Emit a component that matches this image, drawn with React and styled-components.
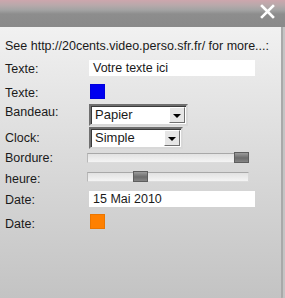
import React from "react";
import styled, { createGlobalStyle } from "styled-components";

const Global = createGlobalStyle`
   html, body {
      margin: 0;
      padding: 0;
      background: #c4c4c4;
   }
   body {
      font-family: "Liberation Sans", Arial, sans-serif;
   }
`;

const Panel = styled.div`
   width: 285px;
   height: 298px;
   display: flex;
   flex-direction: column;
   overflow: hidden;
   border-bottom-right-radius: 4px;
   background: #c4c4c4;
`;

const Header = styled.div`
   height: 27px;
   flex: none;
   display: flex;
   justify-content: flex-end;
   align-items: flex-start;
   padding: 4px 10px 0 0;
   box-sizing: border-box;
   background: linear-gradient(
      to bottom,
      #cda6ad 0px,
      #b9a9ab 5px,
      #a3a3a3 10px,
      #8d8d8d 14px,
      #8a8a8a 26px
   );
`;

const CloseButton = styled.svg`
   width: 15px;
   height: 15px;
   display: block;
`;

const Body = styled.div`
   flex: 1;
   padding: 11px 0 0 5px;
   border-right: 2px solid #a9a9a9;
   margin-right: 2px;
   background: linear-gradient(to bottom, #f1f1f1 0%, #dcdcdc 45%, #c3c3c3 100%);
   color: #1a1a1a;
   font-size: 12.5px;
`;

const Intro = styled.div`
   height: 16px;
   line-height: 16px;
   white-space: nowrap;
   margin-bottom: 6px;
`;

const Rows = styled.div`
   display: flex;
   flex-direction: column;
`;

const Row = styled.div`
   display: flex;
   align-items: flex-start;
   height: ${(props) => props.h}px;
`;

const Label = styled.div`
   width: ${(props) => props.w || 84}px;
   flex: none;
   line-height: 16px;
   padding-top: ${(props) => props.top || 0}px;
`;

const TextInput = styled.div`
   width: 166px;
   height: 16px;
   line-height: 16px;
   background: #ffffff;
   padding-left: 4px;
   box-sizing: border-box;
   margin-top: ${(props) => props.top || 0}px;
   white-space: nowrap;
`;

const Swatch = styled.div`
   width: 15px;
   height: 15px;
   margin-left: 1px;
   margin-top: ${(props) => props.top || 0}px;
   background: ${(props) => props.color};
   border: 1px solid rgba(0, 0, 0, 0.08);
   box-sizing: border-box;
`;

const SelectBox = styled.div`
   width: ${(props) => props.w}px;
   height: 22px;
   margin-top: ${(props) => props.top || 0}px;
   box-sizing: border-box;
   display: flex;
   align-items: center;
   background: #ffffff;
   border-top: 2px solid #6f6f6f;
   border-left: 2px solid #6f6f6f;
   border-right: 2px solid #d8d8d8;
   border-bottom: 2px solid #d8d8d8;
   box-shadow: inset 1px 1px 0 #3a3a3a;
`;

const SelectText = styled.div`
   flex: 1;
   padding-left: 4px;
   line-height: 16px;
   font-size: 13px;
`;

const SelectArrow = styled.div`
   width: 16px;
   height: 16px;
   margin-right: 1px;
   box-sizing: border-box;
   background: #e6e6e6;
   border-top: 1px solid #ffffff;
   border-left: 1px solid #ffffff;
   border-right: 1px solid #707070;
   border-bottom: 1px solid #707070;
   display: flex;
   align-items: center;
   justify-content: center;
   &::after {
      content: "";
      border-left: 4px solid transparent;
      border-right: 4px solid transparent;
      border-top: 4px solid #000000;
      margin-top: 1px;
   }
`;

const Track = styled.div`
   position: relative;
   width: 162px;
   height: 10px;
   margin-left: -2px;
   margin-top: ${(props) => props.top || 0}px;
   background: linear-gradient(to bottom, #e2e2e2, #f4f4f4);
   border-top: 1px solid #a8a8a8;
   border-left: 1px solid #b8b8b8;
   border-right: 1px solid #d8d8d8;
   border-bottom: 1px solid #dcdcdc;
   box-sizing: border-box;
`;

const Thumb = styled.div`
   position: absolute;
   top: -2px;
   width: 15px;
   height: 11px;
   border: 1px solid #5e5e5e;
   box-sizing: border-box;
   background: linear-gradient(to bottom, #9c9c9c, #6c6c6c 55%, #858585);
`;

const Slider = ({ pos, top }) => (
   <Track top={top}>
      <Thumb style={{ left: pos }} />
   </Track>
);

const App = () => {
   return (
      <>
         <Global />
         <Panel>
            <Header>
               <CloseButton viewBox="0 0 15 15">
                  <path
                     d="M2 2 L13 13 M13 2 L2 13"
                     stroke="#ffffff"
                     strokeWidth="2.6"
                     strokeLinecap="square"
                  />
               </CloseButton>
            </Header>
            <Body>
               <Intro>See http://20cents.video.perso.sfr.fr/ for more...:</Intro>
               <Rows>
                  <Row h={24}>
                     <Label top={1}>Texte:</Label>
                     <TextInput>Votre texte ici</TextInput>
                  </Row>
                  <Row h={20}>
                     <Label top={1}>Texte:</Label>
                     <Swatch color="#0000f0" top={0} />
                  </Row>
                  <Row h={23}>
                     <Label>Bandeau:</Label>
                     <SelectBox w={99}>
                        <SelectText>Papier</SelectText>
                        <SelectArrow />
                     </SelectBox>
                  </Row>
                  <Row h={23}>
                     <Label top={3}>Clock:</Label>
                     <SelectBox w={94}>
                        <SelectText>Simple</SelectText>
                        <SelectArrow />
                     </SelectBox>
                  </Row>
                  <Row h={21}>
                     <Label top={0}>Bordure:</Label>
                     <Slider pos={146} top={3} />
                  </Row>
                  <Row h={20}>
                     <Label top={0}>heure:</Label>
                     <Slider pos={45} top={1} />
                  </Row>
                  <Row h={22}>
                     <Label top={1}>Date:</Label>
                     <TextInput top={0}>15 Mai 2010</TextInput>
                  </Row>
                  <Row h={20}>
                     <Label top={3}>Date:</Label>
                     <Swatch color="#ff8000" top={1} />
                  </Row>
               </Rows>
            </Body>
         </Panel>
      </>
   );
};

export default App;
